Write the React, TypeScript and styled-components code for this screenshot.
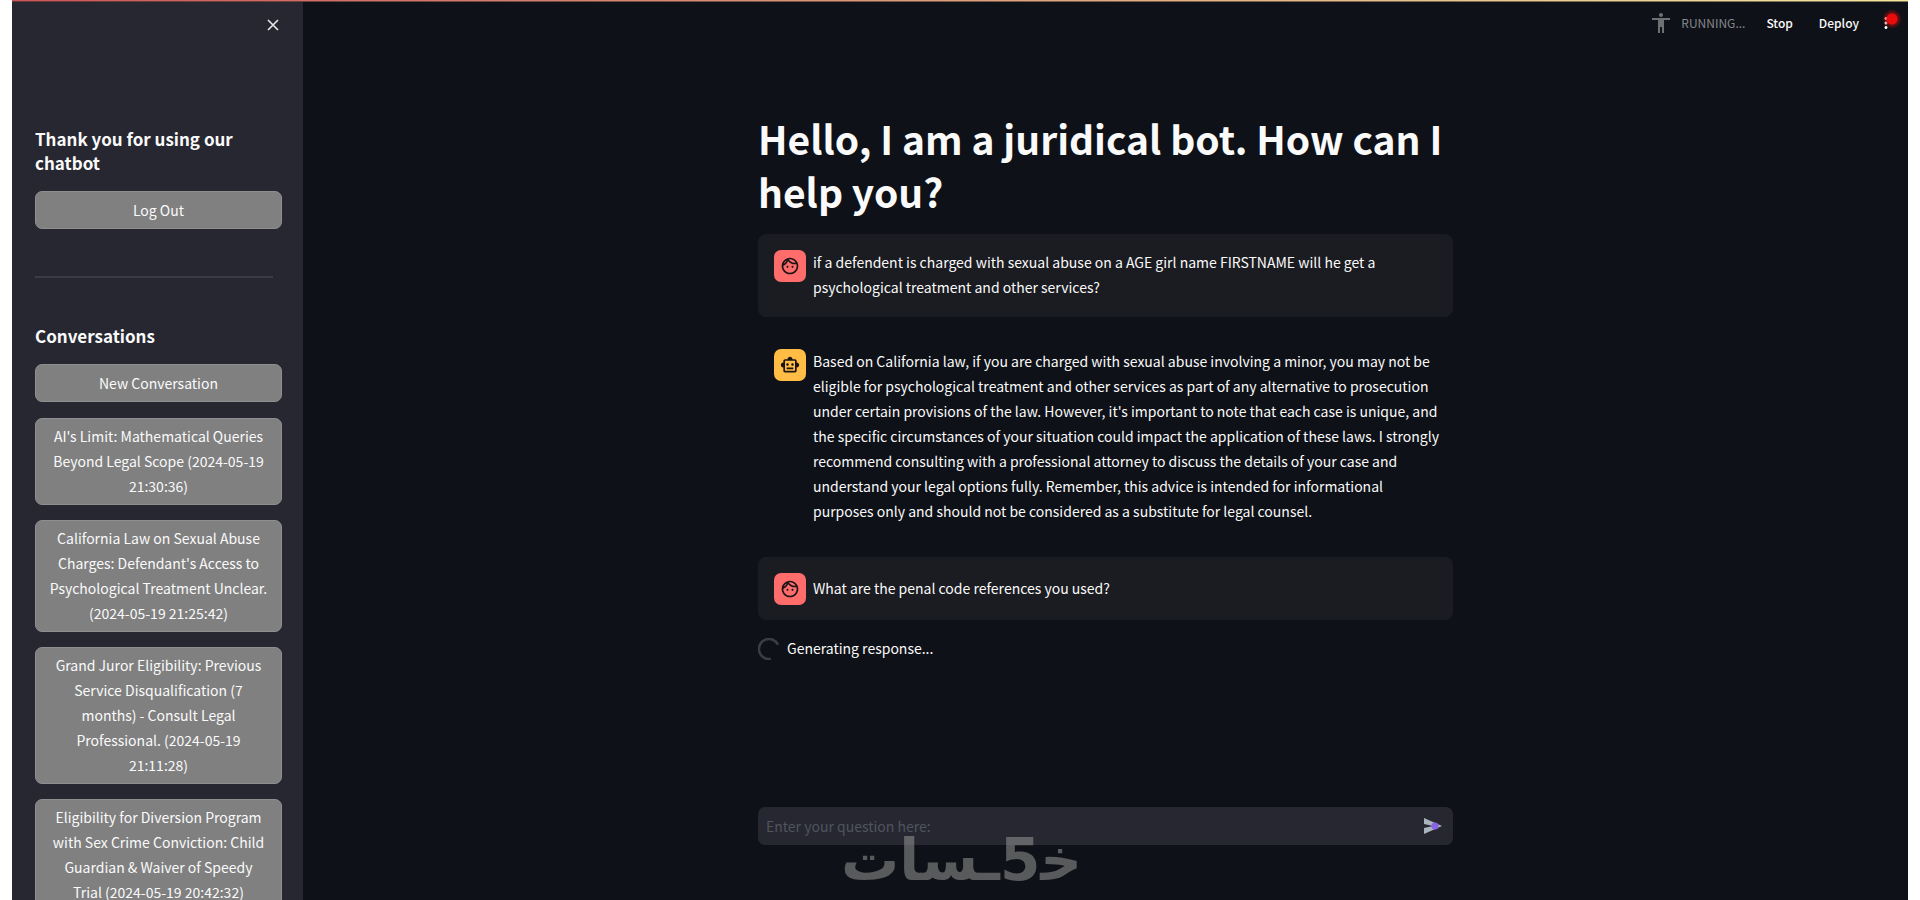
import React from "react";
import styled, { createGlobalStyle, keyframes } from "styled-components";
import { MdAccessibility, MdMoreVert, MdOutlineFace, MdOutlineSmartToy } from "react-icons/md";

const GlobalStyle = createGlobalStyle`
  *, *::before, *::after { box-sizing: border-box; }
  body {
    margin: 0;
    background: #ffffff;
    color: #fafafa;
    font-family: "Noto Sans CJK SC", "Noto Sans", sans-serif;
    font-size: 14px;
    line-height: 25px;
  }
  h1, h2, p, ul { margin: 0; padding: 0; }
  button, input { font: inherit; color: inherit; }
  button { cursor: pointer; }
`;

const Page = styled.div`
  position: relative;
  display: flex;
  height: 100vh;
  margin: 0 12px;
  overflow: hidden;
  background: #0e1117;
`;

const Decoration = styled.div`
  position: absolute;
  top: 0;
  left: 0;
  right: 0;
  height: 2px;
  background: linear-gradient(90deg, #c9595a, #f3e59c);
  box-shadow: inset 0 -1px rgba(14, 17, 23, 0.5);
`;

const Sidebar = styled.aside`
  flex: 0 0 291px;
  padding: 12px 21px 24px 23px;
  overflow: hidden;
  background: #262730;
`;

const CloseRow = styled.div`
  display: flex;
  justify-content: flex-end;
  margin-bottom: 89px;
`;

const PlainButton = styled.button`
  display: inline-flex;
  align-items: center;
  justify-content: center;
  padding: 0;
  border: 0;
  background: transparent;
`;

const CloseButton = styled(PlainButton)`
  width: 18px;
  height: 26px;
`;

const SideTitle = styled.h2`
  margin-bottom: 16px;
  font-size: 17px;
  font-weight: 700;
  line-height: 24px;
`;

const SideButton = styled.button`
  display: block;
  width: 100%;
  min-height: 38px;
  padding: 5px 13px;
  border: 1px solid #8f8f92;
  border-radius: 7px;
  background: #808080;
  text-align: center;
`;

const Rule = styled.hr`
  margin: 47px 9px 46px 0;
  border: 0;
  border-top: 2px solid #3a3b44;
`;

const ConversationList = styled.ul`
  display: flex;
  flex-direction: column;
  gap: 15px;
  list-style: none;

  li:first-child { margin-bottom: 1px; }
`;

const Main = styled.main`
  flex: 1;
  min-width: 0;
  display: flex;
  flex-direction: column;
`;

const Toolbar = styled.header`
  display: flex;
  align-items: center;
  justify-content: flex-end;
  height: 45px;
  padding-right: 13px;
  font-size: 12px;
`;

const Status = styled.div`
  display: flex;
  align-items: center;
  gap: 8px;
  margin-right: 21px;
  color: #84868d;

  svg { color: #6f7074; }
`;

const ToolbarButton = styled(PlainButton)`
  font-weight: 500;

  & + & { margin: 0 18px 0 26px; }
`;

const MenuButton = styled(PlainButton)`
  position: relative;
  width: 18px;
  height: 18px;
`;

const RecordDot = styled.span`
  position: absolute;
  top: -5px;
  left: 5px;
  width: 20px;
  height: 20px;
  border-radius: 50%;
  background: radial-gradient(circle closest-side, #ea0c0c 50%, rgba(200, 12, 12, 0.5) 60%, transparent 100%);
`;

const Column = styled.div`
  flex: 1;
  display: flex;
  flex-direction: column;
  width: 100%;
  max-width: 695px;
  margin: 0 auto;
  padding: 67px 0 55px;
`;

const Title = styled.h1`
  margin-bottom: 16px;
  font-size: 39px;
  font-weight: 700;
  line-height: 53px;
`;

const Messages = styled.div`
  display: flex;
  flex-direction: column;
  gap: 16px;
`;

const Message = styled.article<{ $filled: boolean }>`
  display: flex;
  align-items: flex-start;
  gap: 7px;
  padding: 16px 12px 15px 16px;
  border-radius: 8px;
  background: ${(p) => (p.$filled ? "#1b1c21" : "transparent")};
`;

const Avatar = styled.div<{ $color: string }>`
  flex: none;
  display: flex;
  align-items: center;
  justify-content: center;
  width: 32px;
  height: 32px;
  border-radius: 7px;
  background: ${(p) => p.$color};
  color: #1c1414;
`;

const MessageText = styled.p<{ $centered: boolean }>`
  flex: 1;
  padding-bottom: 2px;
  align-self: ${(p) => (p.$centered ? "center" : "flex-start")};
`;

const spin = keyframes`
  to { transform: rotate(360deg); }
`;

const SpinnerRow = styled.div`
  display: flex;
  align-items: center;
  gap: 7px;
`;

const SpinnerIcon = styled.svg`
  animation: ${spin} 1s linear infinite paused;
`;

const QuestionForm = styled.form`
  display: flex;
  align-items: center;
  height: 38px;
  margin-top: auto;
  padding: 0 11px 0 8px;
  border-radius: 7px;
  background: #262730;
`;

const QuestionInput = styled.input`
  flex: 1;
  min-width: 0;
  padding: 0;
  border: 0;
  outline: 0;
  background: transparent;

  &::placeholder { color: #51545f; opacity: 1; }
`;

const Watermark = styled.div`
  position: absolute;
  left: 829px;
  bottom: 8px;
  direction: rtl;
  color: #969696;
  opacity: 0.55;
  font-family: "DejaVu Sans", sans-serif;
  font-size: 58px;
  font-weight: 700;
  line-height: 64px;
  white-space: nowrap;
  pointer-events: none;
`;

const conversations = [
  "AI's Limit: Mathematical Queries Beyond Legal Scope (2024-05-19 21:30:36)",
  "California Law on Sexual Abuse Charges: Defendant's Access to Psychological Treatment Unclear. (2024-05-19 21:25:42)",
  "Grand Juror Eligibility: Previous Service Disqualification (7 months) - Consult Legal Professional. (2024-05-19 21:11:28)",
  "Eligibility for Diversion Program with Sex Crime Conviction: Child Guardian & Waiver of Speedy Trial (2024-05-19 20:42:32)",
];

type ChatEntry = { role: "user" | "assistant"; text: string; short?: boolean };

const messages: ChatEntry[] = [
  {
    role: "user",
    text: "if a defendent is charged with sexual abuse on a AGE girl name FIRSTNAME will he get a psychological treatment and other services?",
  },
  {
    role: "assistant",
    text: "Based on California law, if you are charged with sexual abuse involving a minor, you may not be eligible for psychological treatment and other services as part of any alternative to prosecution under certain provisions of the law. However, it's important to note that each case is unique, and the specific circumstances of your situation could impact the application of these laws. I strongly recommend consulting with a professional attorney to discuss the details of your case and understand your legal options fully. Remember, this advice is intended for informational purposes only and should not be considered as a substitute for legal counsel.",
  },
  { role: "user", text: "What are the penal code references you used?", short: true },
];

export default function App() {
  return (
    <>
      <GlobalStyle />
      <Page>
        <Sidebar>
          <CloseRow>
            <CloseButton type="button" aria-label="Close sidebar">
              <svg width="12" height="12" viewBox="0 0 12 12" stroke="#e4e4e6" strokeWidth="1.7" fill="none">
                <path d="M1 1l10 10M11 1L1 11" />
              </svg>
            </CloseButton>
          </CloseRow>
          <SideTitle>Thank you for using our chatbot</SideTitle>
          <SideButton type="button">Log Out</SideButton>
          <Rule />
          <SideTitle>Conversations</SideTitle>
          <ConversationList>
            <li>
              <SideButton type="button">New Conversation</SideButton>
            </li>
            {conversations.map((name) => (
              <li key={name}>
                <SideButton type="button">{name}</SideButton>
              </li>
            ))}
          </ConversationList>
        </Sidebar>

        <Main>
          <Toolbar>
            <Status>
              <MdAccessibility size={24} aria-hidden />
              RUNNING...
            </Status>
            <ToolbarButton type="button">Stop</ToolbarButton>
            <ToolbarButton type="button">Deploy</ToolbarButton>
            <MenuButton type="button" aria-label="Main menu">
              <MdMoreVert size={18} aria-hidden />
              <RecordDot />
            </MenuButton>
          </Toolbar>

          <Column>
            <Title>Hello, I am a juridical bot. How can I help you?</Title>
            <Messages>
              {messages.map((m) => (
                <Message key={m.text} $filled={m.role === "user"}>
                  <Avatar $color={m.role === "user" ? "#ff6c6c" : "#ffbd45"}>
                    {m.role === "user" ? (
                      <MdOutlineFace size={20} aria-hidden />
                    ) : (
                      <MdOutlineSmartToy size={20} aria-hidden />
                    )}
                  </Avatar>
                  <MessageText $centered={!!m.short}>{m.text}</MessageText>
                </Message>
              ))}
              <SpinnerRow role="status">
                <SpinnerIcon width="22" height="22" viewBox="0 0 22 22" fill="none" aria-hidden>
                  <path d="M20 6.8A10 10 0 1 0 13 20.8" stroke="#3b3c45" strokeWidth="2.6" />
                </SpinnerIcon>
                Generating response...
              </SpinnerRow>
            </Messages>

            <QuestionForm onSubmit={(e) => e.preventDefault()}>
              <QuestionInput type="text" aria-label="Your question" placeholder="Enter your question here:" />
              <PlainButton type="submit" aria-label="Send">
                <svg width="18" height="18" viewBox="0 0 18 18">
                  <path d="M0 1L18 9L0 17V11L9 9L0 7Z" fill="#a9b3bd" />
                  <circle cx="11" cy="9" r="3.6" fill="#8a63e6" />
                </svg>
              </PlainButton>
            </QuestionForm>
          </Column>
        </Main>

        <Decoration />
        <Watermark lang="ar">{"خ\u200d5ـسات"}</Watermark>
      </Page>
    </>
  );
}
